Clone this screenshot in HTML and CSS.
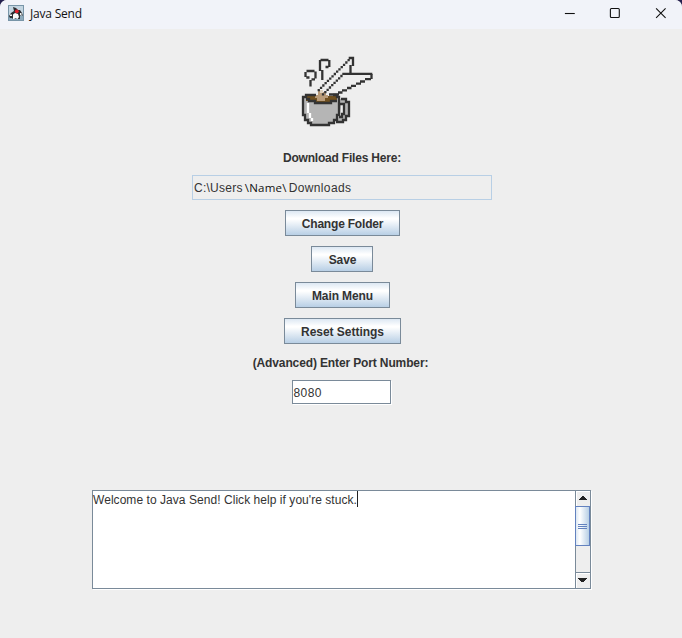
FILE: index.html
```html
<!DOCTYPE html>
<html lang="en">
<head>
<meta charset="utf-8">
<title>Java Send</title>
<link rel="stylesheet" href="styles.css">
</head>
<body>
<div class="window">
  <header class="titlebar">
    <svg class="app-icon" viewBox="0 0 16 16">
      <rect width="16" height="16" fill="#7895a8"/>
      <rect x="1" y="1" width="14" height="14" fill="#c3d5e1"/>
      <rect x="1" y="11" width="14" height="4" fill="#8daabd"/>
      <path d="M5 2l3 1 2 2h2l2 3 1 3-2-1-1 1v3h-2l-1-1-2 1H5l-1-1H2l-1-2 2-3 3-2z" fill="#2b2d31"/>
      <path d="M5 9.500l2-1.500 3 1 1 3-1.500 2-1.500-1-2 1H5z" fill="#fafafa"/>
      <path d="M2 9.500h2v1.500H2zM12 8h1.500v2H12z" fill="#f5f5f5"/>
      <circle cx="8.800" cy="6.300" r="1.900" fill="#e21f2b"/>
    </svg>
    <h1 class="title">Java Send</h1>
    <div class="controls">
      <svg viewBox="0 0 46 29"><path d="M10 13.5h10"/></svg>
      <svg viewBox="0 0 46 29"><rect x="10.5" y="8.5" width="9" height="9" rx="1"/></svg>
      <svg viewBox="0 0 46 29"><path d="M10.2 8.2l9.6 9.6M19.8 8.2l-9.6 9.6"/></svg>
    </div>
  </header>
  <main class="content">
    <svg class="logo" viewBox="298 52 80 78">
      <path fill="#b5b5b5" d="M303 97h36v18h-2v5h-3v3h-4v2h-18v-2h-3v-3h-3v-4h-3z"/>
      <path fill="#b5b5b5" fill-rule="evenodd" d="M339 99h7v3h3v14h-3v4h-4v3h-6v-5l5-3zM341 104v11h3v-11z"/>
      <path fill="#70501f" d="M306 96h31v5h-5v2h-17v-2h-9z"/>
      <path fill="#b99b78" d="M318 90h5v2h3v3h2v3h-3v3h-8v-3h-2v-3h3z"/>
      <path fill="#ddd0bd" d="M320 90h3v3h-3z"/>
      <g class="pixel-line">
        <path d="M309.500 77.500h-3.200M305.500 77v-5M306.500 71h8M315.500 71.500v7M315 79.300h-3.500M310.500 80v6.500"/>
        <path d="M328.500 67h-3M329.300 67v-7M328.500 60h-8M320 60v11M322.300 70v10"/>
        <path d="M353 66v-8h-4.300M350.500 65v9"/>
        <path d="M347.500 60.200h2.300m-4.600 2.300h2.300m-4.600 2.300h2.300m-4.600 2.300h2.300m-4.600 2.300h2.300m-4.600 2.300h2.300m-4.600 2.300h2.300m-4.600 2.300h2.300m-4.600 2.300h2.300m-4.600 2.300h2.300m-4.600 2.300h2.300m-4.600 2.300h2.300m-4.600 2.300h2.300m-4.600 2.300h2.300"/>
        <path d="M342.300 73.800h30M340.300 76h2.300m-4.600 2.300h2.300m-4.600 2.300h2.300m-4.600 2.300h2.300m-4.600 2.300h2.300m-4.600 2.300h2.300m-4.600 2.300h2.300m-4.600 2.300h2.300m-4.600 2.300h2.300"/>
        <path d="M371.500 74v5M365 79.200h6M360 81.500h5M356 83.600h5M351 85.800h5M347 88h4.500M342 90.300h5M338 92.500h4.500M329 94.500h10"/>
        <path d="M316 95h-10v2h-3v18h2v5h3v3h3v2h18v-2h5v-3h3v-5h2V97h-2v-2h-4"/>
        <path d="M306 99h3v2h6v2h16v-2h6"/>
        <path d="M341 99h5v3h3v14h-3v4h-3v2h-7M339 104h5v10h-2v3h-3"/>
      </g>
      <path fill="none" stroke="#fff" stroke-width="2.3" d="M308 103v10M310 113v5M312 118v3"/>
    </svg>
    <p class="label">Download Files Here:</p>
    <div class="path-field"><span class="users">C:\Users</span><span class="name">\Name\</span><span class="downloads">Downloads</span></div>
    <button class="btn w-change">Change Folder</button>
    <button class="btn w-save">Save</button>
    <button class="btn w-main">Main Menu</button>
    <button class="btn w-reset">Reset Settings</button>
    <p class="label port-label">(Advanced) Enter Port Number:</p>
    <div class="port-field">8080</div>
    <section class="log">
      <div class="log-text">Welcome to Java Send! Click help if you're stuck.<i class="caret"></i></div>
      <div class="scrollbar">
        <div class="arrow"><svg viewBox="0 0 14 15" shape-rendering="crispEdges"><path d="M6 5h2v1h1v1h1v1h1v1H3V8h1V7h1V6h1z"/></svg></div>
        <div class="thumb"><i></i><i></i><i></i></div>
        <div class="track"></div>
        <div class="arrow down"><svg viewBox="0 0 14 15" shape-rendering="crispEdges"><path d="M2 5h9v1h-1v1H9v1H8v1H5V8H4V7H3V6H2z"/></svg></div>
      </div>
    </section>
  </main>
</div>
</body>
</html>
```
FILE: styles.css
```css
* { box-sizing: border-box; }
body {
  margin: 0;
  background: #25204f;
  color: #333;
  font: 12px/15px "Liberation Sans", Arial, sans-serif;
}
.window {
  height: 638px;
  overflow: hidden;
  background: #eee;
  border-radius: 7px 7px 0 0;
}
.titlebar {
  display: flex;
  height: 29px;
  padding-left: 8px;
  background: #f1f3f9;
}
.app-icon { width: 16px; height: 16px; margin-top: 5px; }
.title {
  margin: 5px 0 0 6px;
  color: #111;
  font: 12px/17px "Open Sans", "Noto Sans", sans-serif;
  letter-spacing: -0.2px;
}
.controls { display: flex; margin-left: auto; margin-right: -9px; }
.controls svg {
  width: 45.5px;
  height: 29px;
  fill: none;
  stroke: #111;
  stroke-width: 1.1;
}
.content { display: flex; flex-direction: column; align-items: center; }
.logo { width: 80px; height: 78px; margin: 23px 0 0 -6px; }
.pixel-line path { fill: none; stroke: #333; stroke-width: 2.3; }
.label {
  margin: 21px 0 0;
  padding-left: 2px;
  font-weight: bold;
  letter-spacing: -0.2px;
  white-space: nowrap;
}
.path-field {
  display: flex;
  width: 300px;
  height: 25px;
  margin: 9px 0 10px 2px;
  padding: 5px 1px 0;
  border: 1px solid #b8cfe5;
}
.users { letter-spacing: 0.25px; }
.downloads { letter-spacing: 0.35px; }
.name {
  margin: -1px 2px 0 2px;
  color: #111;
  font: 11.5px/15px "Open Sans", "Noto Sans", sans-serif;
  letter-spacing: 0.25px;
}
.btn {
  height: 26px;
  margin: 0 0 10px 2px;
  padding: 2px 0 0 1px;
  border: 1px solid #7a8a99;
  background: linear-gradient(#dde8f3 0%, #fff 30%, #fff 34%, #b8cfe5 100%);
  color: #333;
  font: bold 12px/15px "Liberation Sans", Arial, sans-serif;
}
.w-change { width: 115px; letter-spacing: -0.2px; }
.w-save { width: 62px; letter-spacing: -0.1px; }
.w-main { width: 95px; letter-spacing: -0.1px; }
.w-reset { width: 117px; letter-spacing: -0.03px; }
.port-label { margin: 2px 0 0 -2px; padding-left: 1px; letter-spacing: -0.13px; }
.port-field {
  width: 99px;
  height: 24px;
  margin-top: 9px;
  padding: 5px 1px 0;
  border: 1px solid #7a8a99;
  background: #fff;
  box-shadow: 1px 1px #fff;
  letter-spacing: 0.4px;
}
.log {
  display: flex;
  width: 499px;
  height: 99px;
  margin-top: 86px;
  margin-left: 1px;
  border: 1px solid #7a8a99;
  background: #fff;
  box-shadow: 1px 1px #fff;
}
.log-text { flex: 1; padding-top: 2px; letter-spacing: 0.05px; white-space: nowrap; }
.caret {
  display: inline-block;
  width: 1px;
  height: 16px;
  margin-top: -2px;
  background: #222;
  vertical-align: top;
}
.scrollbar {
  display: flex;
  flex-direction: column;
  width: 15px;
  border-left: 1px solid #7a8a99;
  background: #eee;
}
.arrow { height: 15px; box-shadow: inset 1px 1px #fff; }
.arrow svg { display: block; width: 14px; height: 15px; fill: #222; }
.thumb {
  display: flex;
  flex-direction: column;
  gap: 1px;
  align-items: center;
  justify-content: center;
  height: 40px;
  margin-left: -1px;
  border: 1px solid #6382bf;
  background: linear-gradient(90deg, #dde8f3, #fff 30%, #b8cfe5);
}
.thumb i { width: 9px; height: 1px; background: #6382bf; }
.track { flex: 1; }
.down { height: 16px; border-top: 1px solid #7a8a99; }
```
